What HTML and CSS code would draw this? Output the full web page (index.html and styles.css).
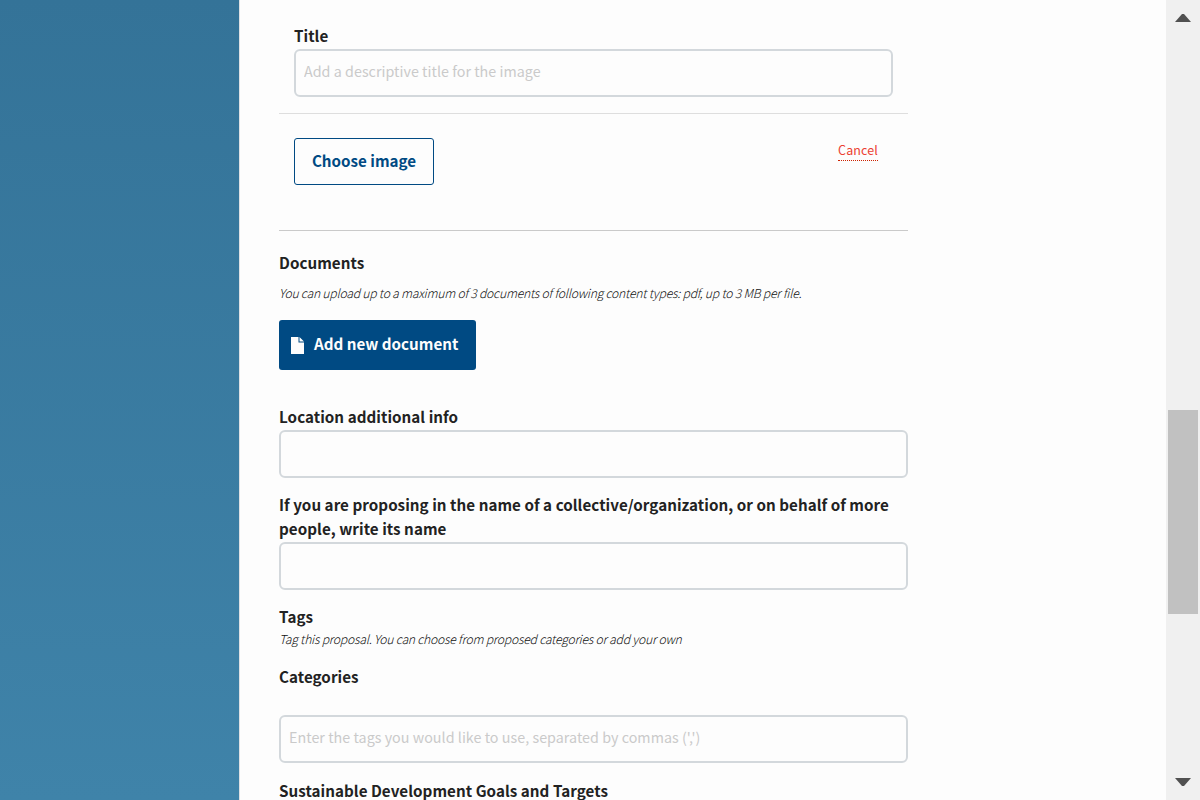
FILE: index.html
```html
<!DOCTYPE html>
<html lang="en">
<head>
<meta charset="utf-8">
<title>New proposal</title>
<link rel="stylesheet" href="styles.css">
</head>
<body>
<div class="page">
  <aside class="side"></aside>
  <main class="content">
    <form class="form">
      <section class="image-block">
        <div class="image-title">
          <label class="label" for="image-title">Title</label>
          <input class="field" id="image-title" placeholder="Add a descriptive title for the image">
        </div>
        <div class="image-actions">
          <button type="button" class="choose">Choose image</button>
          <a class="cancel">Cancel</a>
        </div>
      </section>
      <section class="documents">
        <div class="label">Documents</div>
        <p class="help docs-help">You can upload up to a maximum of 3 documents of following content types: pdf, up to 3 MB per file.</p>
        <button type="button" class="add">
          <svg class="doc-icon" viewBox="0 0 13 17" width="13" height="17"><path d="M0 0H7.5V5.5H13V17H0Z M8.5 0L13 4.5H8.5Z" fill="#fdfdfd"/></svg>
          <span class="add-text">Add new document</span>
        </button>
      </section>
      <section class="group">
        <label class="label" for="location">Location additional info</label>
        <input class="field" id="location">
      </section>
      <section class="group">
        <label class="label" for="collective">If you are proposing in the name of a collective/organization, or on behalf of more<br>people, write its name</label>
        <input class="field" id="collective">
      </section>
      <section class="tags">
        <label class="label" for="tags">Tags</label>
        <p class="help">Tag this proposal. You can choose from proposed categories or add your own</p>
        <div class="label categories">Categories</div>
        <input class="field" id="tags" placeholder="Enter the tags you would like to use, separated by commas (',')">
      </section>
      <div class="label goals">Sustainable Development Goals and Targets</div>
    </form>
  </main>
  <div class="scroll">
    <svg class="arrow" viewBox="0 0 16 8" width="16" height="8"><path d="M0 8L7 0H9L16 8Z" fill="#505050"/></svg>
    <div class="thumb"></div>
    <svg class="arrow" viewBox="0 0 16 8" width="16" height="8"><path d="M0 0H16L9 8H7Z" fill="#505050"/></svg>
  </div>
</div>
</body>
</html>
```
FILE: styles.css
```css
* { box-sizing: border-box; }
body {
  margin: 0;
  height: 800px;
  overflow: hidden;
  background: #fdfdfd;
  color: #222;
  font-family: "Noto Sans CJK SC", "Noto Sans", sans-serif;
}
.page { display: flex; height: 800px; }
.side { width: 239px; background: linear-gradient(#347398, #3f83a9); }
.content { flex: 1; border-left: 1px solid #dee0e3; padding: 24px 0 0 39px; overflow: hidden; }
.form { width: 629px; }
.image-title, .documents, .group, .tags { display: flow-root; }
.label {
  display: block;
  margin: -1px 0 1px;
  font-size: 15.2px;
  font-weight: 700;
  line-height: 24px;
  letter-spacing: 0.04px;
  white-space: nowrap;
}
.field {
  display: block;
  width: 100%;
  height: 48px;
  margin: 1px 0 0;
  padding: 0 8px 5px;
  border: 2px solid #d3d8dc;
  border-radius: 6px;
  background: #fdfdfd;
  color: #222;
  font-family: inherit;
  font-size: 14.3px;
  letter-spacing: 0.03px;
}
.label + .field { margin-top: 1px; }
.field::placeholder { color: #cacaca; opacity: 1; }
.image-block { border-bottom: 1px solid #cacaca; height: 207px; }
.image-title { height: 90px; padding: 0 15px; border-bottom: 1px solid #dedede; }
.image-title .label, .group .label, .tags .categories { margin-bottom: 0; padding-bottom: 1px; }
.image-actions { display: flex; justify-content: space-between; align-items: flex-start; padding: 24px 30px 0 15px; }
.choose {
  width: 140px;
  height: 47px;
  padding: 0 0 4px;
  border: 1px solid #004a83;
  border-radius: 3px;
  background: none;
  color: #004a83;
  font: 700 15.2px/24px "Noto Sans CJK SC", sans-serif;
  white-space: nowrap;
}
.cancel {
  margin-top: 2px;
  padding-bottom: 1px;
  border-bottom: 1px dotted #cc2200;
  color: #ec3f32;
  font-size: 12.5px;
  line-height: 19px;
  letter-spacing: 0.12px;
}
.documents { height: 174px; padding-top: 20px; }
.help {
  margin: 0;
  color: #111;
  font-size: 12.2px;
  font-style: italic;
  font-weight: 300;
  line-height: 20px;
  letter-spacing: -0.24px;
  white-space: nowrap;
}
.docs-help { padding-top: 8px; }
.add {
  display: flex;
  align-items: center;
  width: 197px;
  height: 50px;
  margin-top: 17px;
  padding: 0 0 0 12px;
  border: 0;
  border-radius: 3px;
  background: #004a83;
  color: #fdfdfd;
  font: 700 15.2px/24px "Noto Sans CJK SC", sans-serif;
  white-space: nowrap;
}
.add-text { padding-bottom: 4px; }
.doc-icon { margin: 1px 10px 0 0; }
.group { margin-bottom: 15px; }
.tags .categories { padding: 16px 0 26px; }
.goals { padding-top: 16px; }
.scroll {
  display: flex;
  flex-direction: column;
  align-items: center;
  width: 34px;
  padding: 14px 0;
  background: #f0f0f0;
}
.thumb { width: 30px; height: 204px; margin: 388px 0 164px; background: #c1c1c1; }
.arrow { display: block; flex: none; }
```
